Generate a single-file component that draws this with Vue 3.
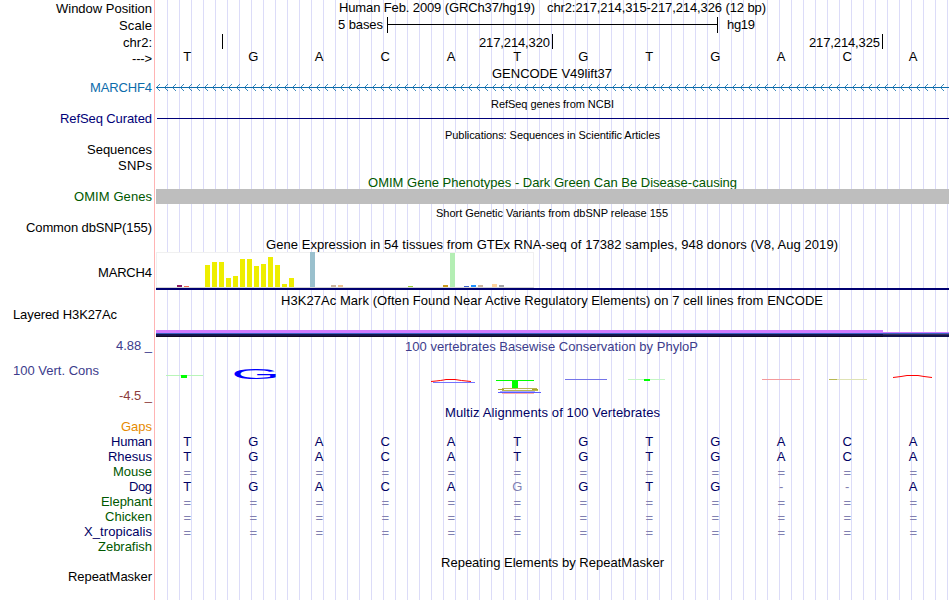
<script setup>
const row = (top, h, o = {}) => ({ top, h, labels: [], titles: [], ...o })
const L = (t, x, y, w, c = 'black') => ({ t, x, y, w: w ?? 152 - x, c })
const T = (t, x, end, y, c = 'black', s = 'n') => ({ t, x, y, w: end - x, c, s })

const seq = 'TGACATGTGACA'
const same = '============'
const species = [
  ['Human', 111, seq, 'navy'],
  ['Rhesus', 108, seq, 'navy'],
  ['Mouse', 113, same, 'green'],
  ['Dog', 129, 'TGACAgGTG--A', 'navy'],
  ['Elephant', 101, same, 'green'],
  ['Chicken', 105, same, 'green'],
  ['X_tropicalis', 84, same, 'navy'],
  ['Zebrafish', 98, '', 'green']
]

const bars = [
  [177, 285, '#8b1c62'], [184, 286, '#ee6a50'],
  [205, 265, '#eeee00'], [212, 262, '#eeee00'], [219, 262, '#eeee00'], [226, 278, '#eeee00'],
  [233, 276, '#eeee00'], [240, 259, '#eeee00'], [247, 259, '#eeee00'], [254, 266, '#eeee00'],
  [261, 264, '#eeee00'], [268, 257, '#eeee00'], [275, 265, '#eeee00'], [282, 284, '#eeee00'],
  [289, 278, '#eeee00'], [310, 252, '#9ac0cd'], [331, 285, '#cdb79e'], [338, 285, '#eec591'],
  [408, 286, '#9acd32'], [443, 285, '#cd9b1d'], [450, 253, '#b4eeb4'], [464, 286, '#3a5fcd'],
  [471, 285, '#1e90ff'], [478, 285, '#cdb79e'], [492, 284, '#ffd39b'], [499, 285, '#a6a6a6']
]

const arrows = Array.from({ length: 99 }, (_, i) => {
  const x = 157 + i * 8
  return `M${x} 86h1v-1h1v-1h1v1h-1v1h-1v1h-1zM${x} 89h1v1h1v1h1v-1h-1v-1h-1v-1h-1z`
}).join('')

const rows = [
  row(0, 17, {
    labels: [L('Window Position', 56, 13)],
    titles: [T('Human Feb. 2009 (GRCh37/hg19)', 339, 535, 12), T('chr2:217,214,315-217,214,326 (12 bp)', 547, 766, 12)]
  }),
  row(17, 17, {
    kind: 'scale',
    labels: [L('Scale', 119, 30)],
    titles: [T('5 bases', 338, 383, 29), T('hg19', 727, 755, 29)]
  }),
  row(34, 16, {
    kind: 'ticks',
    labels: [L('chr2:', 123, 47)],
    titles: [T('217,214,320', 479, 550, 47), T('217,214,325', 809, 880, 47)]
  }),
  row(50, 15, { labels: [L('--->', 132, 63)], bases: seq, baseY: 61, baseColor: 'black' }),
  row(65, 15, { titles: [T('GENCODE V49lift37', 492, 612, 78)] }),
  row(80, 16, { kind: 'gene', labels: [L('MARCHF4', 90, 92, null, 'blue')] }),
  row(96, 15, { titles: [T('RefSeq genes from NCBI', 491, 614, 108, 'black', 's')] }),
  row(111, 16, { kind: 'refseq', labels: [L('RefSeq Curated', 60, 123, null, 'refseq')] }),
  row(127, 15, { titles: [T('Publications: Sequences in Scientific Articles', 445, 660, 139, 'black', 's')] }),
  row(142, 16, { labels: [L('Sequences', 87, 154)] }),
  row(158, 15, { labels: [L('SNPs', 118, 170)] }),
  row(173, 16, { titles: [T('OMIM Gene Phenotypes - Dark Green Can Be Disease-causing', 368, 737, 187, 'green')] }),
  row(189, 15, { kind: 'omim', labels: [L('OMIM Genes', 74, 201, null, 'green')] }),
  row(204, 16, { titles: [T('Short Genetic Variants from dbSNP release 155', 436, 668, 217, 'black', 's')] }),
  row(220, 16, { labels: [L('Common dbSNP(155)', 26, 232)] }),
  row(236, 16, { titles: [T('Gene Expression in 54 tissues from GTEx RNA-seq of 17382 samples, 948 donors (V8, Aug 2019)', 266, 838, 249)] }),
  row(252, 40, { kind: 'gtex', labels: [L('MARCH4', 98, 277)] }),
  row(292, 16, { titles: [T('H3K27Ac Mark (Often Found Near Active Regulatory Elements) on 7 cell lines from ENCODE', 281, 823, 305)] }),
  row(308, 30, { kind: 'h3k', labels: [L('Layered H3K27Ac', 13, 319, 104)] }),
  row(338, 66, {
    kind: 'cons',
    labels: [L('4.88 _', 116, 350, null, 'slate'), L('100 Vert. Cons', 13, 375, 86, 'slate'), L('-4.5 _', 119, 400, null, 'brown')],
    titles: [T('100 vertebrates Basewise Conservation by PhyloP', 405, 698, 351, 'slate')]
  }),
  row(404, 16, { titles: [T('Multiz Alignments of 100 Vertebrates', 445, 660, 417, 'navy')] }),
  row(420, 15, { labels: [L('Gaps', 121, 431, null, 'orange')] }),
  ...species.map(([name, x, bases, color], i) =>
    row(435 + i * 15, 15, { labels: [L(name, x, 446 + i * 15, null, color)], bases, baseY: 446 + i * 15, baseColor: 'navy' })
  ),
  row(555, 15, { titles: [T('Repeating Elements by RepeatMasker', 441, 664, 567)] }),
  row(570, 30, { labels: [L('RepeatMasker', 68, 581)] })
]

const faint = (ch) => ch === '=' || ch === '-' || ch === 'g'
</script>

<template>
  <main class="browser">
    <section v-for="r in rows" :key="r.top" class="row">
      <svg class="label" width="154" :height="r.h" :viewBox="`0 ${r.top} 154 ${r.h}`">
        <text v-for="l in r.labels" :key="l.t" :x="l.x" :y="l.y" :textLength="l.w" :class="l.c">{{ l.t }}</text>
      </svg>
      <svg class="track" width="794" :height="r.h" :viewBox="`155 ${r.top} 794 ${r.h}`">
        <path v-if="r.kind === 'scale'" class="rule" d="M387.5 17V33M717.5 17V33M387 24.5H718" />
        <path v-if="r.kind === 'ticks'" class="rule" d="M222.5 34V49M552.5 34V49M882.5 34V49" />
        <g v-if="r.kind === 'gene'" class="gene crisp">
          <rect x="156" y="87" width="793" height="1" />
          <path class="arrows" :d="arrows" />
        </g>
        <rect v-if="r.kind === 'refseq'" x="157" y="118" width="792" height="1" fill="#000078" />
        <rect v-if="r.kind === 'omim'" x="156" y="189" width="793" height="15" fill="#bebebe" />
        <g v-if="r.kind === 'gtex'" class="crisp">
          <rect x="156" y="252" width="378" height="36" fill="#f0f0f0" />
          <rect x="157" y="253" width="376" height="34" fill="#fff" />
          <rect x="156" y="287" width="378" height="1" fill="#d3d3d3" />
          <rect v-for="b in bars" :key="b[0]" :x="b[0]" :y="b[1]" width="5" :height="287 - b[1]" :fill="b[2]" />
          <rect x="156" y="288" width="793" height="2" fill="#000070" />
        </g>
        <g v-if="r.kind === 'h3k'" class="crisp">
          <rect x="156" y="330" width="727" height="3" fill="#d07bff" />
          <rect x="883" y="332" width="66" height="1" fill="#d07bff" />
          <rect x="156" y="333" width="793" height="1" fill="#3b60c4" />
          <rect x="156" y="334" width="793" height="2" fill="#14144e" />
          <rect x="883" y="334" width="66" height="1" fill="#3c3158" />
          <rect x="156" y="336" width="727" height="1" fill="#100822" />
          <rect x="883" y="336" width="66" height="1" fill="#14144e" />
        </g>
        <g v-if="r.kind === 'cons'">
          <path d="M166 375.5H203" stroke="#b9f5b9" />
          <rect x="181" y="375" width="6" height="3" fill="#0f0" />
          <text class="logo" transform="translate(231.3 378.5) scale(4.5 1)" fill="#00f">G</text>
          <path d="M431 381.5Q442 380.5 446 379.5H455Q460 380.5 471 381.5" stroke="#f00" fill="none" />
          <path d="M433 382.5H475" stroke="#7474ff" />
          <rect x="496" y="380" width="38" height="1" fill="#0f0" />
          <rect x="512" y="380" width="6" height="8" fill="#0f0" />
          <path d="M502 388.5H537M502 390.5H538" stroke="#b9b650" />
          <path d="M498 389.5H504M532 389.5H538" stroke="#aaa722" />
          <path d="M500 391.5H535" stroke="#a6a6ff" />
          <path d="M498 392.5H541" stroke="#5a5cff" />
          <path d="M502 393.5H534" stroke="#ffabab" />
          <path d="M565 379.5H607" stroke="#7474e8" />
          <path d="M628 379.5H665" stroke="#c4f7c4" />
          <rect x="644" y="379" width="6" height="2" fill="#0f0" />
          <path d="M762 379.5H800" stroke="#f49a9c" />
          <path d="M829 379.5H867" stroke="#dfe3b5" />
          <path d="M829 379.5H837" stroke="#b8b850" />
          <path d="M893 377.5Q902 376.5 907 375.5H918Q923 376.5 932 377.5" stroke="#f00" fill="none" />
        </g>
        <text v-for="t in r.titles" :key="t.t" :x="t.x" :y="t.y" :textLength="t.w" :class="[t.c, t.s]">{{ t.t }}</text>
        <template v-if="r.bases">
          <text
            v-for="(ch, i) in r.bases"
            :key="i"
            :x="187.2 + i * 66"
            :y="r.baseY + (ch === '=' ? 1 : 0)"
            :class="['base', faint(ch) ? 'faint' : r.baseColor]"
          >{{ ch.toUpperCase() }}</text>
        </template>
      </svg>
    </section>
  </main>
</template>

<style>
body {
  margin: 0;
  background: #fff;
}
</style>

<style scoped>
.browser {
  display: flex;
  flex-direction: column;
  width: 949px;
  height: 600px;
  overflow: hidden;
  font: 13px "Liberation Sans", Arial, sans-serif;
}
.row {
  display: flex;
  flex: none;
}
svg {
  display: block;
  flex: none;
  overflow: visible;
}
.label {
  border-right: 1px solid #ffb4b4;
}
.track {
  background: linear-gradient(#fff, #fff) 0 0 / 1px 100% no-repeat,
    linear-gradient(to right, #dcdcf8 1px, transparent 1px) 0 0 / 12px 100%;
}
.rule {
  stroke: #000;
  fill: none;
}
.gene {
  fill: #0c6cab;
}
.arrows {
  opacity: 0.8;
}
.crisp {
  shape-rendering: crispEdges;
}
.s {
  font-size: 11px;
}
.base {
  text-anchor: middle;
}
.logo {
  font: 14px "Liberation Sans", Arial, sans-serif;
}
.black { fill: #000; }
.blue { fill: #0c6cab; }
.refseq { fill: #000078; }
.green { fill: #005800; }
.slate { fill: #3c3c8c; }
.brown { fill: #8c3c3c; }
.orange { fill: #e68a00; }
.navy { fill: #000064; }
.faint { fill: #8080b1; }
</style>
